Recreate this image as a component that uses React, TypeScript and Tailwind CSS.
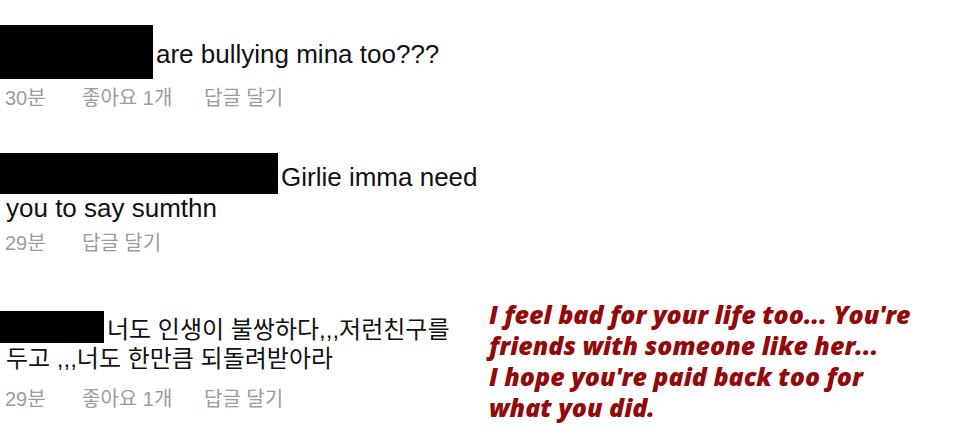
import React from 'react';

interface Comment {
  id: number;
  boxWidth: number;
  boxHeight: number;
  drop: string;
  metaGap: string;
  size: string;
  text: string;
  time: string;
  likes?: string;
}

const comments: Comment[] = [
  { id: 1, boxWidth: 153, boxHeight: 54, drop: 'align-[-16px]', metaGap: 'mt-[8px]', size: 'text-[26px]', text: 'are bullying mina too???', time: '30분', likes: '좋아요 1개' },
  { id: 2, boxWidth: 278, boxHeight: 41, drop: 'align-[-8px]', metaGap: 'mt-[9px]', size: 'text-[26px]', text: 'Girlie imma need you to say sumthn', time: '29분' },
  { id: 3, boxWidth: 104, boxHeight: 32, drop: 'align-[-5px]', metaGap: 'mt-[15px]', size: 'text-[24px]', text: '너도 인생이 불쌍하다,,,저런친구를 두고 ,,,너도 한만큼 되돌려받아라', time: '29분', likes: '좋아요 1개' },
];

function CommentRow({ c, className }: { c: Comment; className: string }) {
  return (
    <div className={className}>
      <p className={`w-[478px] pl-[6px] ${c.size} leading-[29px] text-[#111]`}>
        <span
          className={`-ml-[6px] mr-[3px] inline-block bg-black ${c.drop}`}
          style={{ width: c.boxWidth, height: c.boxHeight }}
        />
        {c.text}
      </p>
      <div className={`${c.metaGap} flex pl-[5px] text-[20px] leading-[22px] text-[#9c9c9c]`}>
        <span className="w-[77px]">{c.time}</span>
        {c.likes && <span className="w-[122px]">{c.likes}</span>}
        <span>답글 달기</span>
      </div>
    </div>
  );
}

export default function App() {
  return (
    <div
      className="flex h-[446px] w-[960px] overflow-hidden bg-white"
      style={{ fontFamily: '"Liberation Sans", "Noto Sans CJK KR", sans-serif' }}
    >
      <div className="flex w-[489px] flex-col">
        <CommentRow c={comments[0]} className="pt-[25px]" />
        <CommentRow c={comments[1]} className="pt-[44px]" />
        <CommentRow c={comments[2]} className="pt-[57px]" />
      </div>
      <div
        className="pt-[299px] text-[25px] font-extrabold italic leading-[31px] text-[#920a0a]"
        style={{ fontFamily: '"Open Sans", sans-serif' }}
      >
        <p>I feel bad for your life too... You're</p>
        <p>friends with someone like her...</p>
        <p>I hope you're paid back too for</p>
        <p>what you did.</p>
      </div>
    </div>
  );
}
